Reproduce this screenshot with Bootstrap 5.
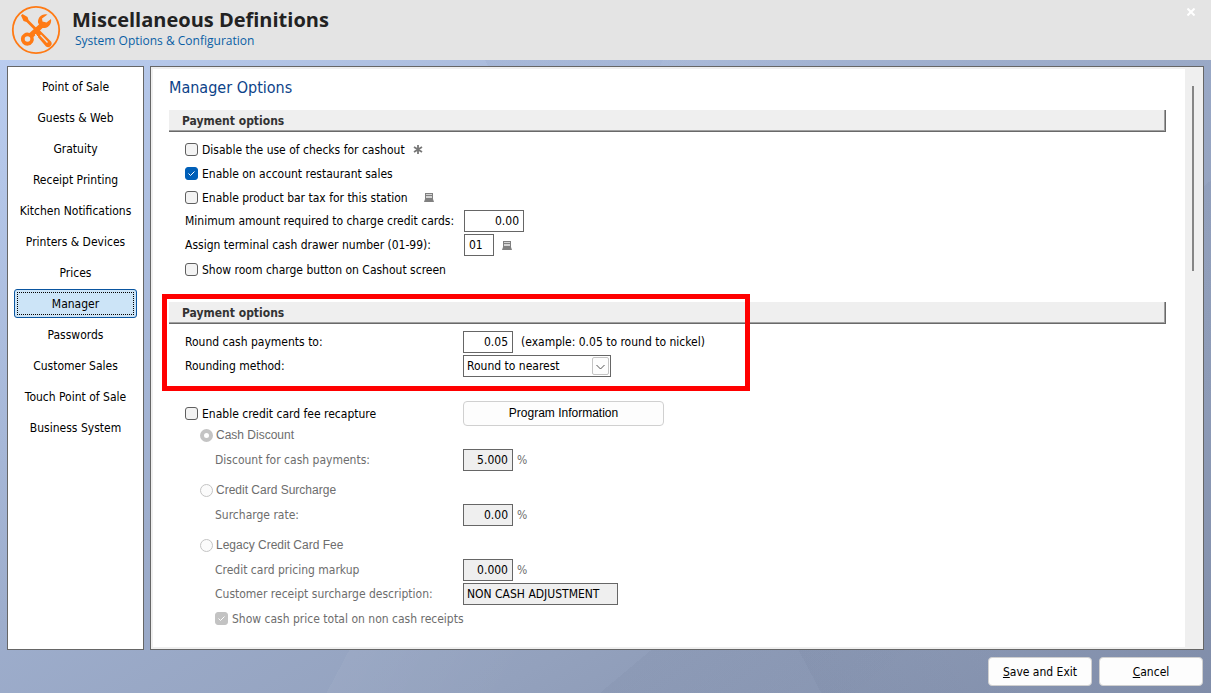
<!DOCTYPE html>
<html lang="en">
<head>
<meta charset="utf-8">
<meta name="viewport" content="width=device-width, initial-scale=1">
<title>Miscellaneous Definitions</title>
<link href="https://cdn.jsdelivr.net/npm/bootstrap@5.3.0/dist/css/bootstrap.min.css" rel="stylesheet">
<style>
body{font-family:"DejaVu Sans Condensed","Noto Sans",sans-serif;font-size:12px;line-height:16px;color:#000;
 background:
 linear-gradient(118deg,transparent 44%,rgba(255,255,255,.04) 44%,transparent 56%),
 linear-gradient(62deg,transparent 52%,rgba(20,30,60,.03) 52%,transparent 66%),
 linear-gradient(140deg,transparent 70%,rgba(20,30,60,.03) 70%,transparent 84%),
 linear-gradient(150deg,#bdd0f3 0%,#9dadcc 45%,#93a1bd 70%,#808da9 100%)}
.app-head{height:60px;background:#e4e4e4}
.app-logo{margin:5px 11px 0}
.app-title{font:700 20px/24px "Open Sans",sans-serif;color:#222;margin:0}
.app-sub{font-family:"Open Sans",sans-serif;font-size:12px;line-height:18px;color:#0a5fa5;padding-left:3px}
.close-x{background:none;border:0;padding:0;width:10px;height:24px;margin-right:15px;line-height:0}
.workspace{padding:6px 7px;gap:6px}
.side-menu{width:137px;flex:none;background:#fff;border:1px solid #666;padding:5px 6px;gap:2px}
.side-item{height:29px;border:1px solid transparent;border-radius:3px;background:none;padding:2px;white-space:nowrap;color:#000;display:flex}
.side-item span{flex:1;display:flex;align-items:center;justify-content:center;border:1px dotted transparent}
.side-item.active{background:#cce4f7;border-color:#0a55a0}
.side-item.active span{border-color:#000}
.pane{background:#fff;border:1px solid #666;box-shadow:inset 0 0 0 2px #efefef;min-width:0}
.pane-body{padding:9px 19px 4px 18px}
.pane-title{font-size:16px;line-height:24px;color:#0d4389;margin:0 0 10px}
.track{width:18px;background:#efefef;flex:none;padding:19px 7px}
.thumb{width:2px;height:34%;background:#858585}
.bar{height:22px;margin:0;padding-left:13px;font-size:12px;line-height:22px;font-weight:700;color:#333;background:#efefef;border-bottom:1px solid #696969;border-right:1px solid #696969;box-shadow:inset -1px -1px #a0a0a0}
.fields{padding:5px 0 0 16px}
.frow{display:flex;align-items:center;height:24px;white-space:nowrap}
.frow.choice{height:20px}
.lab{width:278px;flex:none}
.sec1 .lab{width:279px}
.lvl1{padding-left:15px}
.lvl2{padding-left:30px}
.lvl2 .lab{width:248px}
.group{margin-bottom:8px}
.group .choice{margin-bottom:3px}
.dim{color:#6d6d6d}
.arial{font-family:"Liberation Sans",Arial,sans-serif}
.tick{appearance:none;width:13px;height:13px;margin:0 4px 0 0;flex:none;border:1px solid #5f5f5f;border-radius:3px;background:#f3f3f3 center/11px no-repeat}
.tick+label{padding-top:2px}
.tick:checked{background-color:#005fb8;border-color:#005fb8;background-image:url("data:image/svg+xml,%3Csvg xmlns='http://www.w3.org/2000/svg' viewBox='0 0 11 11'%3E%3Cpath d='M2.5 5.5l2 2 4-4' fill='none' stroke='%23fff'/%3E%3C/svg%3E")}
.tick:disabled{background-color:#c3c3c3;border-color:#c3c3c3}
.dot{appearance:none;width:13px;height:13px;margin:0 3px 0 0;flex:none;border:1px solid #c4c4c4;border-radius:50%;background:#fbfbfb}
.dot:checked{border-width:4px;background:#fff}
.box{height:22px;border:1px solid #666;border-radius:0;padding:0 5px;background:#fff;color:#000;font-size:12px;line-height:16px}
.box:disabled{background:#efefef;opacity:1}
.num{text-align:right;padding-right:4px;width:50px}
.w60{width:60px}
.w30{width:30px;padding:0 4px}
.w155{width:155px;padding:0 3px}
.pick{appearance:none;width:148px;padding:0 3px;background:#fff right 1px center/17px 18px no-repeat url("data:image/svg+xml,%3Csvg xmlns='http://www.w3.org/2000/svg' viewBox='0 0 17 18'%3E%3Crect x='.5' y='.5' width='16' height='17' rx='1.5' fill='%23fdfdfd' stroke='%23c4c4c4'/%3E%3Cpath d='M4.500 8l4 4 4-4' fill='none' stroke='%23555'/%3E%3C/svg%3E")}
.soft{background:#fdfdfd;border:1px solid #d0d0d0;border-radius:4px;padding:0;color:#000;font-size:12px;line-height:16px}
.soft:hover{background:#fff}
.info{width:201px;height:25px}
.foot{padding:1px 8px 7px;gap:7px}
.foot .soft{width:104px;height:29px}
.marker{position:absolute;left:-7px;top:-8px;width:588px;height:97px;border:5px solid red;pointer-events:none}
.sec2{margin-top:21px}
.sec2 .fields{padding-top:6px}
.fee{padding-top:23px}
</style>
</head>
<body class="d-flex flex-column min-vh-100">
<header class="app-head d-flex align-items-start justify-content-between">
 <div class="d-flex">
  <svg class="app-logo flex-shrink-0" width="50" height="50" viewBox="0 0 50 50" aria-hidden="true">
   <circle cx="25" cy="25" r="23.200" fill="none" stroke="#ff7a14" stroke-width="1.800"/>
   <g fill="#ff7a14">
    <path d="M10 10.500l1.500-1.500 5 3 1 3 9 9-2 2-9-9-3-1z"/>
    <path d="M25 27.500l3.500-2.500 11.500 11.500a3.600 3.600 0 0 1-5 5l-9.500-11z"/>
    <path d="M36.500 9.500a7.500 7.500 0 0 0-9.500 8l1 2-9.500 8.500a6.500 6.500 0 1 0 4 4l9-9a7.500 7.500 0 0 0 8.500-9l-4.500 3.500-4-1-.500-3z"/>
   </g>
   <circle cx="16.500" cy="34" r="2.800" fill="#e4e4e4"/>
   <path d="M29.500 30l7 7.500" stroke="#e4e4e4" stroke-width="1.300"/>
   <path d="M24 29l3 3" stroke="#e4e4e4"/>
  </svg>
  <div class="pt-2">
   <h1 class="app-title">Miscellaneous Definitions</h1>
   <div class="app-sub">System Options &amp; Configuration</div>
  </div>
 </div>
 <button class="close-x" type="button" aria-label="Close"><svg width="8" height="8" viewBox="0 0 8 8"><path d="M.5.5l7 7M7.500.5l-7 7" stroke="#fff" stroke-width="2"/></svg></button>
</header>
<main class="workspace d-flex flex-grow-1">
 <nav class="side-menu d-flex flex-column" aria-label="Sections">
  <button class="side-item" type="button"><span>Point of Sale</span></button>
  <button class="side-item" type="button"><span>Guests &amp; Web</span></button>
  <button class="side-item" type="button"><span>Gratuity</span></button>
  <button class="side-item" type="button"><span>Receipt Printing</span></button>
  <button class="side-item" type="button"><span>Kitchen Notifications</span></button>
  <button class="side-item" type="button"><span>Printers &amp; Devices</span></button>
  <button class="side-item" type="button"><span>Prices</span></button>
  <button class="side-item active" type="button"><span>Manager</span></button>
  <button class="side-item" type="button"><span>Passwords</span></button>
  <button class="side-item" type="button"><span>Customer Sales</span></button>
  <button class="side-item" type="button"><span>Touch Point of Sale</span></button>
  <button class="side-item" type="button"><span>Business System</span></button>
 </nav>
 <form class="pane d-flex flex-grow-1">
  <div class="pane-body flex-grow-1">
   <h2 class="pane-title">Manager Options</h2>
   <section class="sec1">
    <h3 class="bar">Payment options</h3>
    <div class="fields">
     <div class="frow"><input class="tick" type="checkbox" id="c1"><label for="c1">Disable the use of checks for cashout</label>
      <svg class="ms-2" width="10" height="9" viewBox="0 0 10 9"><path d="M5 0v9M1 2l8 5M1 7l8-5" stroke="#777" stroke-width="1.800"/></svg></div>
     <div class="frow"><input class="tick" type="checkbox" id="c2" checked><label for="c2">Enable on account restaurant sales</label></div>
     <div class="frow"><input class="tick" type="checkbox" id="c3"><label for="c3">Enable product bar tax for this station</label>
      <svg class="ms-3" width="10" height="9" viewBox="0 0 10 9"><path d="M1 0h8v6H1z" fill="#808080"/><path d="M2 1h6v1H2zM2 3h6v2H2z" fill="#d4d4d4"/><path d="M1 6h8l1 3H0z" fill="#808080"/></svg></div>
     <div class="frow"><label class="lab" for="t1">Minimum amount required to charge credit cards:</label><input class="box num w60" id="t1" value="0.00"></div>
     <div class="frow"><label class="lab" for="t2">Assign terminal cash drawer number (01-99):</label><input class="box w30" id="t2" value="01">
      <svg class="ms-2" width="10" height="9" viewBox="0 0 10 9"><path d="M1 0h8v6H1z" fill="#808080"/><path d="M2 1h6v1H2zM2 3h6v2H2z" fill="#d4d4d4"/><path d="M1 6h8l1 3H0z" fill="#808080"/></svg></div>
     <div class="frow"><input class="tick" type="checkbox" id="c4"><label for="c4">Show room charge button on Cashout screen</label></div>
    </div>
   </section>
   <section class="sec2 position-relative">
    <h3 class="bar">Payment options</h3>
    <div class="fields">
     <div class="frow"><label class="lab" for="t3">Round cash payments to:</label><input class="box num" id="t3" value="0.05"><span class="ms-2">(example: 0.05 to round to nickel)</span></div>
     <div class="frow"><label class="lab" for="s1">Rounding method:</label><select class="box pick" id="s1"><option>Round to nearest</option></select></div>
    </div>
    <div class="marker"></div>
   </section>
   <section class="fields fee">
    <div class="frow"><div class="lab d-flex align-items-center"><input class="tick" type="checkbox" id="c5"><label for="c5">Enable credit card fee recapture</label></div><button class="soft info arial" type="button">Program Information</button></div>
    <div class="group dim">
     <div class="frow choice lvl1 arial"><input class="dot" type="radio" name="fee" id="r1" checked disabled><label for="r1">Cash Discount</label></div>
     <div class="frow lvl2"><label class="lab" for="t4">Discount for cash payments:</label><input class="box num" id="t4" value="5.000" disabled><span class="ms-1">%</span></div>
    </div>
    <div class="group dim">
     <div class="frow choice lvl1 arial"><input class="dot" type="radio" name="fee" id="r2" disabled><label for="r2">Credit Card Surcharge</label></div>
     <div class="frow lvl2"><label class="lab" for="t5">Surcharge rate:</label><input class="box num" id="t5" value="0.00" disabled><span class="ms-1">%</span></div>
    </div>
    <div class="group dim">
     <div class="frow choice lvl1 arial"><input class="dot" type="radio" name="fee" id="r3" disabled><label for="r3">Legacy Credit Card Fee</label></div>
     <div class="frow lvl2"><label class="lab" for="t6">Credit card pricing markup</label><input class="box num" id="t6" value="0.000" disabled><span class="ms-1">%</span></div>
     <div class="frow lvl2"><label class="lab" for="t7">Customer receipt surcharge description:</label><input class="box w155" id="t7" value="NON CASH ADJUSTMENT" disabled></div>
     <div class="frow lvl2"><input class="tick" type="checkbox" id="c6" checked disabled><label for="c6">Show cash price total on non cash receipts</label></div>
    </div>
   </section>
  </div>
  <div class="track"><div class="thumb"></div></div>
 </form>
</main>
<footer class="foot d-flex justify-content-end">
 <button class="soft" type="button"><u>S</u>ave and Exit</button>
 <button class="soft" type="button"><u>C</u>ancel</button>
</footer>
<script src="https://cdn.jsdelivr.net/npm/bootstrap@5.3.0/dist/js/bootstrap.bundle.min.js"></script>
</body>
</html>
